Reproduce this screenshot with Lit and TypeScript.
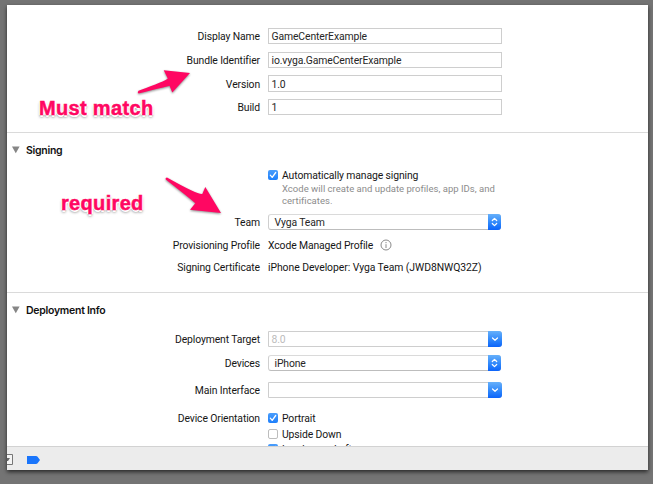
import { LitElement, html, css, svg } from "lit";
import { customElement, property } from "lit/decorators.js";

@customElement("x-check")
class XCheck extends LitElement {
  @property({ type: Boolean }) checked = false;
  static styles = css`
    :host { display: block; width: 10px; height: 10px; flex: none; }
    .box { box-sizing: border-box; width: 10px; height: 10px; border: 1px solid #bdbdbd; border-radius: 2px; background: #fff; }
    .on { border: 0; background: linear-gradient(#4a9dfb, #1d7ffb); }
    svg { display: block; }
  `;
  render() {
    return this.checked
      ? html`<div class="box on"><svg width="10" height="10" viewBox="0 0 10 10"><path d="M2.3 5.2 4.2 7.4 7.7 2.5" fill="none" stroke="#fff" stroke-width="1.3" stroke-linecap="round" stroke-linejoin="round"/></svg></div>`
      : html`<div class="box"></div>`;
  }
}

@customElement("x-field")
class XField extends LitElement {
  @property() value = "";
  @property() kind: "text" | "combo" | "select" = "text";
  static styles = css`
    :host { display: block; width: 234px; height: 16px; }
    .field { box-sizing: border-box; display: flex; justify-content: space-between; align-items: center; width: 234px; height: 100%; border: 1px solid #cecece; background: #fff; padding-left: 2.5px; color: #262626; white-space: nowrap; }
    .value { padding-top: 2px; }
    .combo { border-radius: 0 3px 3px 0; color: #bcbcbc; }
    .select { width: 233px; border-color: #dadada #cfcfcf #bdbdbd; border-radius: 3px; padding-left: 5.5px; }
    .button { flex: none; width: 14px; height: 16px; margin: -1px -1px -1px 0; border-radius: 0 3px 3px 0; background: linear-gradient(#66b0fa, #2b84fb 60%, #0c64fa); }
    .select .button { width: 13px; }
    svg { display: block; }
  `;
  render() {
    const glyph = this.kind === "combo"
      ? svg`<path d="M4.5 7 7 9.300 9.500 7"/>`
      : svg`<path d="M4.3 6.500 6.500 4.400 8.700 6.500M4.3 9.500 6.500 11.600 8.700 9.500"/>`;
    return html`<div class="field ${this.kind}">
      <span class="value">${this.value}</span>
      ${this.kind === "text" ? "" : html`<div class="button"><svg width="14" height="16" fill="none" stroke="#fff" stroke-width="1.2" stroke-linecap="round" stroke-linejoin="round">${glyph}</svg></div>`}
    </div>`;
  }
}

@customElement("app-root")
class AppRoot extends LitElement {
  static styles = css`
    :host { display: block; position: relative; box-sizing: border-box; width: 653px; height: 484px; padding: 5px 5px 14px 7px; overflow: hidden; background: #747474; color: #161616; font: 10.4px/14px Roboto, "Liberation Sans", sans-serif; letter-spacing: -0.12px; }
    .window { display: flex; flex-direction: column; width: 641px; height: 465px; background: #fff; box-shadow: 0 2px 4px rgba(0, 0, 0, 0.65); }
    .content { flex: none; height: 441px; overflow: hidden; }
    section { box-sizing: border-box; border-bottom: 1px solid #dadada; }
    .identity { height: 128px; padding-top: 19px; }
    .signing { height: 160px; padding-top: 8px; }
    .deployment { padding-top: 8px; border: 0; }
    .row { display: grid; grid-template-columns: 253px 1fr; column-gap: 8px; align-items: center; white-space: nowrap; }
    .label { text-align: right; padding-top: 2px; }
    .text { padding-top: 2px; }
    .h16 { height: 16px; }
    .h20 { height: 20px; }
    .h22 { height: 22px; }
    .h23 { height: 23px; }
    .h24 { height: 24px; }
    .h30 { height: 30px; }
    .tall { height: 17px; }
    .header { display: flex; align-items: center; height: 18px; padding-left: 5px; gap: 6px; font: 600 10.5px/14px Inter, "Liberation Sans", sans-serif; letter-spacing: -0.27px; color: #111; }
    .option { display: flex; align-items: center; gap: 4px; }
    .auto { margin-top: 8px; }
    .note { width: 225px; height: 24px; margin: 0 0 4px 275px; font-size: 9.5px; line-height: 11.5px; color: #8c8c8c; letter-spacing: 0.02px; white-space: nowrap; }
    .managed { display: flex; align-items: center; gap: 7px; }
    .certificate { letter-spacing: -0.06px; }
    .first { margin-top: 8px; }
    .orient { margin-top: 5px; }
    .last { margin-top: -1px; }
    .bar { box-sizing: border-box; flex: none; display: flex; align-items: center; height: 24px; border-top: 1px solid #d2d2d2; background: #ececec; }
    svg { display: block; flex: none; }
    .note-big { position: absolute; color: #ff0762; font: bold 20px/24px "Liberation Sans", Arial, sans-serif; letter-spacing: 0.33px; white-space: nowrap; -webkit-text-stroke: 0.5px #ff0762; text-shadow: 1.5px 0 #fff, -1.5px 0 #fff, 0 1.5px #fff, 0 -1.5px #fff, 0 2px 3px rgba(0, 0, 0, 0.65); }
    .must { left: 39px; top: 96px; }
    .required { left: 61px; top: 191px; }
    .arrows { position: absolute; left: 0; top: 0; pointer-events: none; filter: drop-shadow(0 1px 1px rgba(0, 0, 0, 0.45)); }
  `;

  private field(label: string, value: string, size: string, kind = "text", extra = "") {
    return html`<div class="row ${size}"><div class="label">${label}</div><x-field class=${extra} .value=${value} .kind=${kind as any}></x-field></div>`;
  }

  private header(title: string) {
    return html`<div class="header"><svg width="8" height="8"><path d="M0 .5h7.6L3.8 7.3z" fill="#868686"/></svg><span class="text">${title}</span></div>`;
  }

  render() {
    return html`
      <div class="window">
        <div class="content">
          <section class="identity">
            ${this.field("Display Name", "GameCenterExample", "h24")}
            ${this.field("Bundle Identifier", "io.vyga.GameCenterExample", "h24")}
            ${this.field("Version", "1.0", "h23", "text", "tall")}
            ${this.field("Build", "1", "h24")}
          </section>
          <section class="signing">
            ${this.header("Signing")}
            <div class="row h16 auto"><span></span><div class="option"><x-check checked></x-check><span class="text">Automatically manage signing</span></div></div>
            <div class="note">Xcode will create and update profiles, app IDs, and<br>certificates.</div>
            ${this.field("Team", "Vyga Team", "h22", "select")}
            <div class="row h24"><div class="label">Provisioning Profile</div><div class="managed"><span class="text">Xcode Managed Profile</span>
              <svg width="12" height="12" fill="none" stroke="#8a8a8a"><circle cx="6" cy="6" r="5"/><path d="M6 5.2V9M6 3v1.2"/></svg></div></div>
            <div class="row h20"><div class="label">Signing Certificate</div><span class="text certificate">iPhone Developer: Vyga Team (JWD8NWQ32Z)</span></div>
          </section>
          <section class="deployment">
            ${this.header("Deployment Info")}
            <div class="first"></div>
            ${this.field("Deployment Target", "8.0", "h24", "combo")}
            ${this.field("Devices", "iPhone", "h24", "select")}
            ${this.field("Main Interface", "", "h30", "combo")}
            <div class="row h16 orient"><div class="label">Device Orientation</div><div class="option"><x-check checked></x-check><span class="text">Portrait</span></div></div>
            <div class="row h16"><span></span><div class="option"><x-check></x-check><span class="text">Upside Down</span></div></div>
            <div class="row h16 last"><span></span><div class="option"><x-check checked></x-check><span class="text">Landscape Left</span></div></div>
          </section>
        </div>
        <div class="bar">
          <svg width="34" height="22"><path d="M0 6.500h5.500v10H0" fill="#f4f4f4" stroke="#777"/><path d="M0 10h3L1 13H0z" fill="#666"/><path d="M20 8h9q1 0 1.600.8L33 12l-2.400 3.200q-.6.8-1.600.8h-9z" fill="#1a75fb"/></svg>
        </div>
      </div>
      <svg class="arrows" width="240" height="220" fill="#ff0762">
        <path d="M190 73 163.700 70.200 167.800 78.500Q165.500 81 138.500 90.800Q137 92.500 138.500 93.600Q165 87 169.500 85.800L172.300 92.500z"/>
        <path d="M221 213 205.300 187 202.300 194Q198 195 167 177.500Q165 177.500 165.700 179.500Q192 200 195.300 203.300L190 209.800z"/>
      </svg>
      <div class="note-big must">Must match</div>
      <div class="note-big required">required</div>
    `;
  }
}
